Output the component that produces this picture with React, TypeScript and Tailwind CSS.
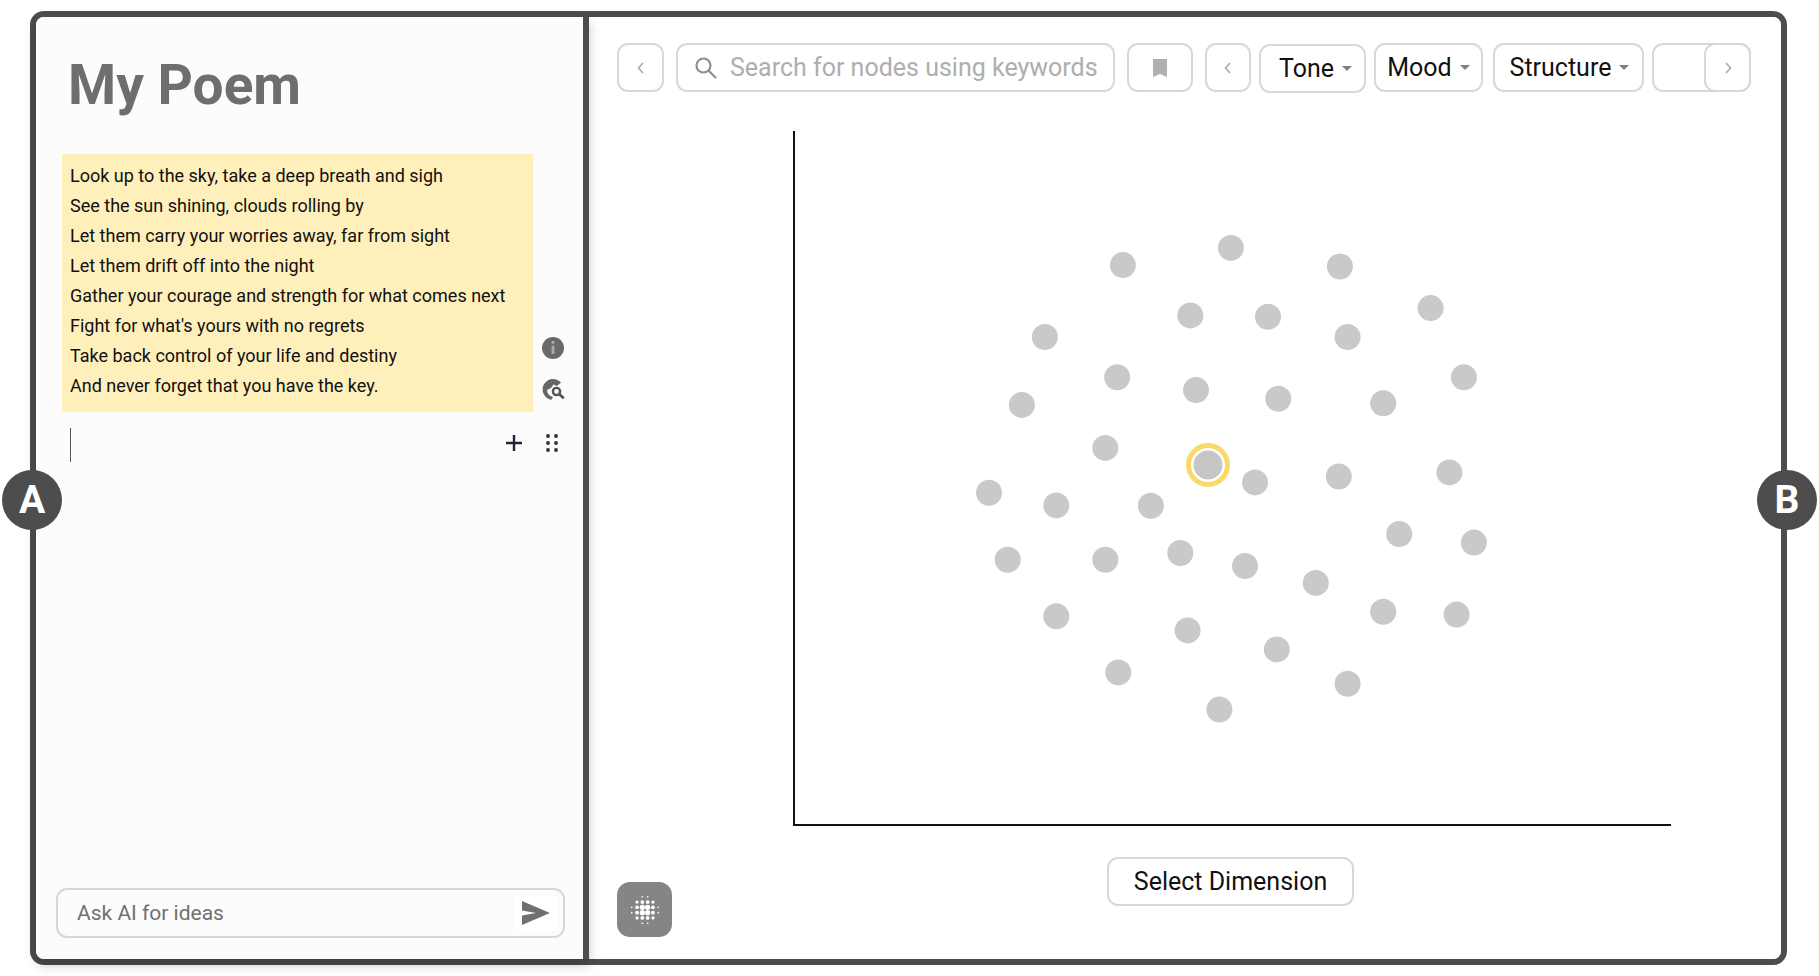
const dots: [number, number][] = [
  [1122.9, 265.1], [1230.9, 247.9], [1339.9, 266.5], [1430.6, 308.1], [1190.3, 315.4], [1268, 316.7],
  [1347.6, 337], [1044.9, 337], [1117.2, 377.3], [1196, 390.1], [1278.3, 398.7], [1383.2, 403.2],
  [1463.9, 377.3], [1021.9, 404.9], [1105.3, 447.9], [1255, 482.4], [1338.8, 476.5], [1449.4, 472.4],
  [989, 492.7], [1056.3, 505.4], [1150.9, 505.8], [1399.2, 534], [1473.9, 542.6], [1007.7, 559.8],
  [1105.3, 559.8], [1180.3, 553], [1245, 566], [1315.8, 582.9], [1383.2, 611.8], [1456.6, 614.6],
  [1056.3, 616.3], [1187.6, 630.4], [1276.8, 649.4], [1118.3, 672.4], [1347.6, 683.8], [1219.4, 709.6],
];

const lines = [
  "Look up to the sky, take a deep breath and sigh",
  "See the sun shining, clouds rolling by",
  "Let them carry your worries away, far from sight",
  "Let them drift off into the night",
  "Gather your courage and strength for what comes next",
  "Fight for what's yours with no regrets",
  "Take back control of your life and destiny",
  "And never forget that you have the key.",
];

function Caret() {
  return <span className="ml-2 inline-block h-0 w-0 border-x-[5px] border-t-[5px] border-x-transparent border-t-[#808080]" />;
}

function Chevron({ d }: { d: string }) {
  return (
    <svg width="12" height="16" viewBox="0 0 12 16" fill="none" stroke="#b0b0b0" strokeWidth="1.8">
      <path d={d} />
    </svg>
  );
}

function Badge({ label, className }: { label: string; className: string }) {
  return (
    <div className={`absolute top-[459px] z-20 flex h-[60px] w-[60px] items-center justify-center rounded-full bg-[#4d4d4d] text-[39px] font-bold text-white ${className}`}>
      {label}
    </div>
  );
}

function GridGlyph() {
  const pts: [number, number, number][] = [];
  for (let y = -2.5; y <= 2.5; y++) {
    for (let x = -2.5; x <= 2.5; x++) {
      const r = Math.hypot(x, y);
      if (r > 2.6) continue;
      const size = r < 1 ? 2.6 : r < 1.7 ? 1.9 : r < 2.3 ? 1.6 : 0.85;
      pts.push([x * 5.3, y * 5.3, size]);
    }
  }
  return (
    <svg width="32" height="32" viewBox="-16 -16 32 32" fill="#ffffff">
      {pts.map(([x, y, r], i) => (
        <circle key={i} cx={x} cy={y} r={r} />
      ))}
    </svg>
  );
}

export default function App() {
  return (
    <div className="h-[976px] w-[1819px] bg-white pt-[11px] pl-[30px] font-['Roboto',sans-serif]">
      <div className="relative h-[954px] w-[1757px]">
        <Badge label="A" className="left-[-28px]" />
        <Badge label="B" className="left-[1727px]" />
        <div className="flex h-full w-full rounded-[14px] border-[6px] border-[#4d4d4d] bg-white">
          {/* Left panel */}
          <div className="z-10 flex h-full w-[553px] shrink-0 flex-col rounded-l-[8px] border-r-[6px] border-[#4d4d4d] bg-[#fcfcfc] shadow-[0_6px_12px_rgba(0,0,0,0.22)]">
            <h1 className="mt-[34px] ml-[32px] text-[55px] leading-[68px] font-bold text-[#6e6e6e]">My Poem</h1>
            <div className="mt-[35px] flex items-end">
              <div className="ml-[26px] h-[258px] w-[471px] bg-[#ffefbb] px-2 py-[7px] text-[18px] leading-[30px] text-[#111111]">
                {lines.map((l) => (
                  <div key={l}>{l}</div>
                ))}
              </div>
              <div className="mb-[11px] ml-[9px] flex flex-col gap-[19px]">
                <div className="flex h-[22px] w-[22px] items-center justify-center rounded-full bg-[#6a6a6a]">
                  <svg width="6" height="14" viewBox="0 0 6 14" fill="#aaaaaa">
                    <rect x="1.6" y="0" width="2.8" height="2.8" />
                    <rect x="1.6" y="4.6" width="2.8" height="8.4" />
                  </svg>
                </div>
                <svg width="23" height="23" viewBox="0 0 23 23" fill="none">
                  <path d="M19 4.5A10.5 10.5 0 1 0 9.5 21.8L11 19A8 8 0 0 1 5 12L9 10L11.5 6.5L15 8Z" fill="#666666" />
                  <circle cx="14.5" cy="13.5" r="3.6" stroke="#555555" strokeWidth="2.4" />
                  <path d="m17.3 16.3 4.5 4" stroke="#555555" strokeWidth="2.8" />
                </svg>
              </div>
            </div>
            <div className="mt-[16px] flex h-[34px] items-center">
              <div className="ml-[34px] h-[34px] w-px bg-[#555555]" />
              <svg className="mb-[4px] ml-[434px]" width="18" height="18" viewBox="0 0 18 18" stroke="#1f2430" strokeWidth="2.4">
                <path d="M9 1v16M1 9h16" />
              </svg>
              <svg className="mb-[4px] ml-[23px]" width="12" height="18" viewBox="0 0 12 18" fill="#2a2e38">
                {[2, 9, 16].map((y) => (
                  <g key={y}>
                    <circle cx="2" cy={y} r="1.9" />
                    <circle cx="10" cy={y} r="1.9" />
                  </g>
                ))}
              </svg>
            </div>
            <div className="mt-auto mb-[21px] ml-[20px] flex h-[50px] w-[509px] items-center rounded-[11px] border-2 border-[#dcd5d6] pr-[5px] pl-[19px]">
              <span className="pt-px text-[21px] text-[#707070]">Ask AI for ideas</span>
              <div className="ml-auto flex h-[34px] w-[44px] items-center justify-center bg-white">
                <svg width="28" height="24" viewBox="0 0 28 24" fill="#707070">
                  <path d="M0 0 28 12 0 24V14.5L14 12 0 9.5Z" />
                </svg>
              </div>
            </div>
          </div>

          {/* Right panel */}
          <div className="flex min-w-0 flex-1 flex-col rounded-r-[8px] bg-white pt-[26px] pl-[28px]">
            <div className="flex h-[49px] items-start">
              <button className="flex h-[49px] w-[47px] items-center justify-center rounded-[11px] border-2 border-[#ddd6d7]">
                <Chevron d="M8 3 3.5 8 8 13" />
              </button>
              <div className="ml-[12px] flex h-[49px] w-[439px] items-center rounded-[11px] border-2 border-[#ddd6d7] pl-[16px] text-[25px] text-[#aeaeae]">
                <svg width="24" height="24" viewBox="0 0 24 24" fill="none" stroke="#8f8f8f" strokeWidth="2.2">
                  <circle cx="9.5" cy="9.5" r="7" />
                  <path d="m14.5 14.5 7.5 7.5" />
                </svg>
                <span className="ml-[12px]">Search for nodes using keywords</span>
              </div>
              <button className="ml-[12px] flex h-[49px] w-[66px] items-center justify-center rounded-[11px] border-2 border-[#ddd6d7]">
                <svg width="14" height="18" viewBox="0 0 14 18" fill="#b0b0b0">
                  <path d="M0 0h14v18l-7-3-7 3Z" />
                </svg>
              </button>
              <button className="ml-[12px] flex h-[49px] w-[46px] items-center justify-center rounded-[11px] border-2 border-[#ddd6d7]">
                <Chevron d="M8 3 3.5 8 8 13" />
              </button>
              <button className="mt-px ml-[8px] flex h-[49px] w-[107px] items-center justify-center rounded-[11px] border-2 border-[#ddd6d7] pl-[6px] text-[25px] text-[#111111]">
                Tone
                <Caret />
              </button>
              <button className="ml-[8px] flex h-[49px] w-[109px] items-center justify-center rounded-[11px] border-2 border-[#ddd6d7] text-[25px] text-[#111111]">
                Mood
                <Caret />
              </button>
              <button className="ml-[10px] flex h-[49px] w-[151px] items-center justify-center rounded-[11px] border-2 border-[#ddd6d7] pl-[2px] text-[25px] text-[#111111]">
                Structure
                <Caret />
              </button>
              <div className="relative ml-[8px] h-[49px] w-[99px] rounded-[11px] border-2 border-[#ddd6d7]">
                <button className="absolute top-[-2px] right-[-2px] flex h-[49px] w-[47px] items-center justify-center rounded-[11px] border-2 border-[#ddd6d7] bg-white">
                  <Chevron d="M4 3 8.5 8 4 13" />
                </button>
              </div>
            </div>

            <svg className="mt-[39px] ml-[173px] shrink-0" width="890" height="697" viewBox="790 131 890 697">
              <path d="M794 131V825H1671" fill="none" stroke="#111111" strokeWidth="2" />
              {dots.map(([x, y]) => (
                <circle key={`${x}-${y}`} cx={x} cy={y} r="13" fill="#c9c9c9" />
              ))}
              <circle cx="1208" cy="465" r="19.5" fill="#ffffff" stroke="#fbd968" strokeWidth="5" />
              <circle cx="1208" cy="465" r="14.5" fill="#c6c6c6" />
            </svg>

            <div className="mt-[29px] flex">
              <div className="mt-[25px] flex h-[55px] w-[55px] items-center justify-center rounded-[13px] bg-[#858585]">
                <GridGlyph />
              </div>
              <button className="ml-[435px] h-[49px] w-[247px] rounded-[11px] border-2 border-[#ddd6d7] text-[25px] text-[#111111]">
                Select Dimension
              </button>
            </div>
          </div>
        </div>
      </div>
    </div>
  );
}
